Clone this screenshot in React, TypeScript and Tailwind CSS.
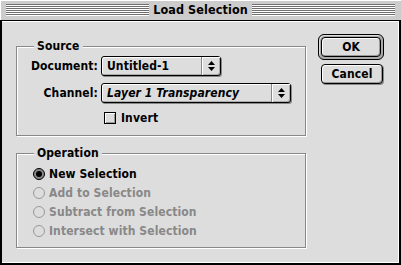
import React from "react";

function Stripes() {
  return (
    <div className="flex-1 flex flex-col h-[12px]">
      {[0, 1, 2, 3, 4, 5].map((i) => (
        <div key={i} className="flex flex-col">
          <div className="h-px bg-[#6f6f6f]" />
          <div className="h-px bg-white" />
        </div>
      ))}
    </div>
  );
}

function Arrows() {
  return (
    <svg width="7" height="10" viewBox="0 0 7 10">
      <polygon points="3.5,0 7,4 0,4" fill="#000" />
      <polygon points="0,6 7,6 3.5,10" fill="#000" />
    </svg>
  );
}

function Popup({ w, children, italic }: { w: string; children: React.ReactNode; italic?: boolean }) {
  return (
    <div
      className={`${w} h-[20px] flex rounded-[3px] border border-black bg-[#dddddd] shadow-[1px_1px_0_#888888,inset_1px_1px_0_#ffffff,inset_-1px_-1px_0_#aaaaaa]`}
    >
      <div className={`flex-1 pl-[5px] flex items-center leading-none ${italic ? "italic" : ""}`}>{children}</div>
      <div className="w-[19px] border-l border-[#888888] flex items-center justify-center shadow-[inset_1px_1px_0_#ffffff]">
        <Arrows />
      </div>
    </div>
  );
}

function Radio({ checked, disabled, label }: { checked?: boolean; disabled?: boolean; label: string }) {
  return (
    <div className="h-[19px] flex items-center gap-[4px]">
      {checked ? (
        <div className="w-[12px] h-[12px] rounded-full border border-black bg-[#888888] flex items-center justify-center">
          <div className="w-[6px] h-[6px] rounded-full bg-black" />
        </div>
      ) : (
        <div
          className={`w-[12px] h-[12px] rounded-full border ${disabled ? "border-[#999999]" : "border-black"} bg-[#dddddd]`}
        />
      )}
      <span className={disabled ? "text-[#888888]" : "text-black"}>{label}</span>
    </div>
  );
}

function Group({ label, className, children }: { label: string; className: string; children: React.ReactNode }) {
  return (
    <div
      className={`relative border border-[#888888] shadow-[1px_1px_0_#ffffff,inset_1px_1px_0_#ffffff] ${className}`}
    >
      <div className="absolute left-[17px] top-[-9px] px-[3px] leading-[16px] bg-[#dddddd]">{label}</div>
      {children}
    </div>
  );
}

export default function App() {
  return (
    <div className="w-[401px] h-[265px] flex flex-col bg-[#cccccc] text-[12px] font-bold text-black font-['DejaVu_Sans_Condensed','DejaVu_Sans',sans-serif] tracking-[0.1px]">
      <div className="h-[20px] flex items-center px-[6px] shadow-[inset_1px_1px_0_#ffffff]">
        <Stripes />
        <div className="px-[4px] leading-none text-[12.5px]">Load Selection</div>
        <Stripes />
      </div>
      <div className="flex-1 flex border-t border-black border-l-2 border-r-2 border-b-2">
        <div className="flex-1 flex bg-[#dddddd] border-t border-white border-r border-b border-[#777777] border-t-white">
          <div className="ml-[14px] mt-[24px] flex flex-col">
            <Group label="Source" className="w-[290px] h-[90px] pt-[9px]">
              <div className="flex flex-col gap-[7px]">
                <div className="flex items-center">
                  <div className="w-[81px] text-right">Document:</div>
                  <div className="ml-[3px]">
                    <Popup w="w-[120px]">Untitled-1</Popup>
                  </div>
                </div>
                <div className="flex items-center">
                  <div className="w-[81px] text-right">Channel:</div>
                  <div className="ml-[3px]">
                    <Popup w="w-[190px]" italic>
                      Layer 1 Transparency
                    </Popup>
                  </div>
                </div>
              </div>
              <div className="mt-[9px] ml-[87px] flex items-center gap-[5px] h-[12px]">
                <div className="w-[12px] h-[12px] border border-black bg-[#dddddd] shadow-[inset_1px_1px_0_#ffffff,inset_-1px_-1px_0_#999999]" />
                <span className="leading-none">Invert</span>
              </div>
            </Group>
            <Group label="Operation" className="mt-[17px] w-[290px] h-[95px] pt-[10px] pl-[16px]">
              <Radio checked label="New Selection" />
              <Radio disabled label="Add to Selection" />
              <Radio disabled label="Subtract from Selection" />
              <Radio disabled label="Intersect with Selection" />
            </Group>
          </div>
          <div className="ml-[12px] mt-[12px] flex flex-col">
            <div className="w-[66px] h-[26px] rounded-[6px] border border-black bg-[#aaaaaa] p-[2px] shadow-[inset_1px_1px_0_#dddddd]">
              <div className="w-full h-full rounded-[4px] border border-black bg-[#dddddd] flex items-center justify-center shadow-[inset_1px_1px_0_#ffffff,inset_-1px_-1px_0_#999999]">
                OK
              </div>
            </div>
            <div className="mt-[4px] ml-[3px] w-[62px] h-[20px] rounded-[4px] border border-black bg-[#dddddd] flex items-center justify-center shadow-[1px_1px_0_#888888,inset_1px_1px_0_#ffffff,inset_-1px_-1px_0_#999999]">
              Cancel
            </div>
          </div>
        </div>
      </div>
    </div>
  );
}
